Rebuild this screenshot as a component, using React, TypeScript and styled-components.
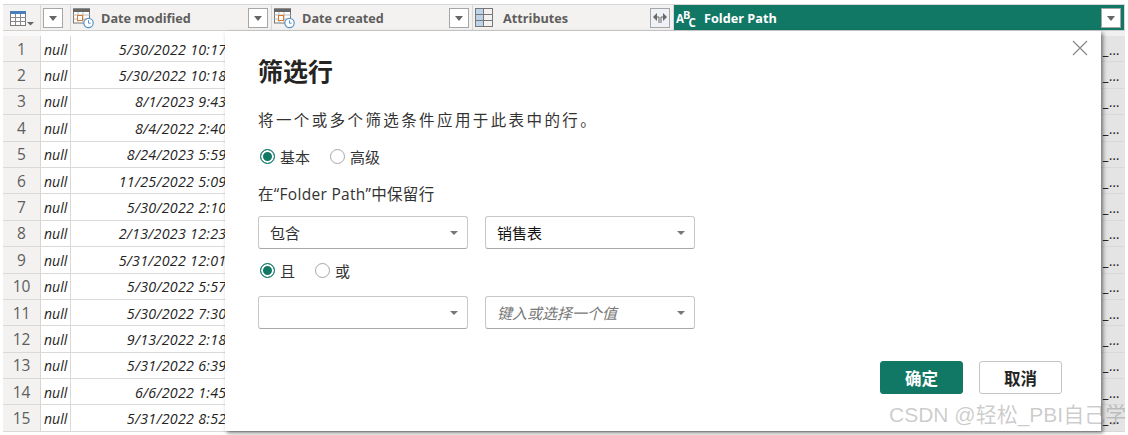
import React from 'react';
import styled, { createGlobalStyle } from 'styled-components';

const GREEN = '#117865';
const FONT = `"Open Sans", "Noto Sans CJK SC", sans-serif`;

const GlobalStyle = createGlobalStyle`
  html, body {
    margin: 0;
    padding: 0;
    background: #fff;
  }
`;

const Page = styled.div`
  position: relative;
  width: 1128px;
  height: 435px;
  overflow: hidden;
  background: #fff;
  font-family: ${FONT};
  padding: 4px 3px 0;
  box-sizing: border-box;
`;

const COLUMNS = '38px 30px 201px 201px 201px 451px';

const HeaderRow = styled.div`
  display: grid;
  grid-template-columns: ${COLUMNS};
  height: 27px;
  background: #f3f2f1;
  border-top: 1px solid #d6d6d6;
  border-bottom: 1px solid #cfcfcf;
  box-sizing: border-box;
`;

const HeaderCell = styled.div<{ $active?: boolean }>`
  display: flex;
  align-items: center;
  gap: 6px;
  box-sizing: border-box;
  padding: 0 3px 0 2px;
  min-width: 0;
  border-right: 1px solid #d6d6d6;
  background: ${(p) => (p.$active ? GREEN : 'transparent')};
  color: ${(p) => (p.$active ? '#fff' : '#605e5c')};
  font-size: 12.7px;
  font-weight: 700;
`;

const HeaderLabel = styled.span`
  flex: 1;
  padding-top: 1px;
  white-space: nowrap;
`;

const FilterButton = styled.div`
  flex: none;
  width: 20px;
  height: 20px;
  box-sizing: border-box;
  border: 1px solid #a6a6a6;
  background: #fff;
  display: flex;
  align-items: center;
  justify-content: center;

  &::after {
    content: '';
    margin-top: 2px;
    border-left: 4.5px solid transparent;
    border-right: 4.5px solid transparent;
    border-top: 5px solid #666;
  }
`;

const SwapButton = styled.div`
  flex: none;
  width: 20px;
  height: 20px;
  box-sizing: border-box;
  border: 1px solid #a6a6a6;
  background: #eef1f5;
  display: flex;
  align-items: center;
  justify-content: center;
`;

const Spacer = styled.div`
  display: grid;
  grid-template-columns: ${COLUMNS};
  height: 5px;
`;

const SpacerCell = styled.div<{ $tone: string }>`
  background: ${(p) => p.$tone};
`;

const Row = styled.div`
  display: grid;
  grid-template-columns: ${COLUMNS};
  height: 26.4px;
  box-sizing: border-box;
  border-bottom: 1px solid #d9d9d9;
`;

const RowNumber = styled.div`
  background: #f3f2f1;
  border-right: 1px solid #d6d6d6;
  color: #605e5c;
  font-size: 15.5px;
  display: flex;
  align-items: center;
  justify-content: center;
`;

const Cell = styled.div`
  display: flex;
  align-items: center;
  box-sizing: border-box;
  padding: 1px 3px 0 3px;
  border-right: 1px solid #d9d9d9;
  background: #fff;
  color: #252423;
  font-size: 14px;
  font-style: italic;
  white-space: nowrap;
  overflow: hidden;
`;

const DateCell = styled(Cell)`
  justify-content: flex-end;
  padding-right: 0;
  font-size: 14.3px;
  letter-spacing: 0.25px;
`;

const PathCell = styled(Cell)`
  justify-content: flex-end;
  padding-right: 5px;
  background: #e4e4e4;
  border-right: none;
`;

const Dialog = styled.div`
  position: absolute;
  left: 225px;
  top: 31px;
  width: 876px;
  height: 400px;
  box-sizing: border-box;
  padding: 22px 33px 0;
  background: #fff;
  box-shadow: 2px 2px 4px rgba(0, 0, 0, 0.5);
  color: #252423;
`;

const CloseIcon = styled.svg`
  position: absolute;
  top: 9px;
  right: 13px;
  width: 16px;
  height: 16px;
`;

const Title = styled.h1`
  margin: 0;
  font-size: 25px;
  line-height: 36px;
  font-weight: 700;
  color: #252423;
`;

const Description = styled.p`
  margin: 20px 0 0;
  font-size: 15.5px;
  line-height: 22px;
  letter-spacing: 2.4px;
  color: #333;
`;

const RadioRow = styled.div<{ $gap: number; $top: number }>`
  display: flex;
  align-items: center;
  gap: ${(p) => p.$gap}px;
  margin-top: ${(p) => p.$top}px;
  height: 22px;
  padding-left: 2px;
`;

const RadioOption = styled.label`
  display: flex;
  align-items: center;
  gap: 5px;
  font-size: 15px;
  color: #333;
`;

const RadioDot = styled.span<{ $on?: boolean }>`
  width: 15px;
  height: 15px;
  box-sizing: border-box;
  border-radius: 50%;
  border: 1px solid ${(p) => (p.$on ? GREEN : '#a6a6a6')};
  background: ${(p) => (p.$on ? GREEN : '#fff')};
  box-shadow: ${(p) => (p.$on ? 'inset 0 0 0 2px #fff' : 'none')};
`;

const KeepLabel = styled.div`
  margin-top: 16px;
  font-size: 15.5px;
  line-height: 22px;
  letter-spacing: 0.3px;
  color: #333;
`;

const SelectRow = styled.div<{ $top: number }>`
  display: flex;
  gap: 17px;
  margin-top: ${(p) => p.$top}px;
`;

const Select = styled.div<{ $placeholder?: boolean; $dark?: boolean }>`
  position: relative;
  width: 210px;
  height: 33px;
  box-sizing: border-box;
  padding: 0 11px;
  border: 1px solid #c8c8c8;
  border-bottom-color: #a8a8a8;
  border-radius: 3px;
  display: flex;
  align-items: center;
  font-size: 15px;
  font-style: ${(p) => (p.$placeholder ? 'italic' : 'normal')};
  color: ${(p) => (p.$placeholder ? '#777' : p.$dark ? '#111' : '#333')};

  &::after {
    content: '';
    position: absolute;
    right: 9px;
    top: 14px;
    border-left: 4px solid transparent;
    border-right: 4px solid transparent;
    border-top: 4px solid #777;
  }
`;

const Footer = styled.div`
  position: absolute;
  right: 39px;
  bottom: 37px;
  display: flex;
  gap: 16px;
`;

const Button = styled.button<{ $primary?: boolean }>`
  width: 83px;
  height: 33px;
  padding: 0;
  border-radius: 3px;
  box-sizing: border-box;
  border: 1px solid ${(p) => (p.$primary ? GREEN : '#c4c4c4')};
  background: ${(p) => (p.$primary ? GREEN : '#fff')};
  color: ${(p) => (p.$primary ? '#fff' : '#252423')};
  font-family: inherit;
  font-size: 16.5px;
  font-weight: 700;
`;

const Watermark = styled.div`
  position: absolute;
  left: 889px;
  top: 401px;
  font-family: "Liberation Sans", "Noto Sans CJK SC", sans-serif;
  font-size: 21px;
  line-height: 28px;
  color: rgba(120, 120, 120, 0.38);
  white-space: nowrap;
`;

const TableIcon = () => (
  <svg width="30" height="20" viewBox="0 0 30 20" style={{ flex: 'none', marginLeft: 1 }}>
    <rect x="4.5" y="3.5" width="15" height="14" fill="#fff" stroke="#7a7a7a" />
    <rect x="4" y="3" width="16" height="3" fill="#4a7ebb" />
    <path d="M4.5 9.5h15M4.5 13.5h15M9.5 6v11M14.5 6v11" stroke="#8a8a8a" />
    <path d="M21 14h7l-3.5 3.5z" fill="#666" />
  </svg>
);

const DateTimeIcon = () => (
  <svg width="22" height="22" viewBox="0 0 22 22" style={{ flex: 'none' }}>
    <rect x="0.5" y="2" width="16" height="14" fill="#fff" stroke="#777" />
    <rect x="0" y="1.5" width="17" height="3.5" fill="#666" />
    <path d="M0.5 8h16M0.5 12h16M5 5v11M10 5v11" stroke="#bbb" />
    <rect x="4.5" y="8.5" width="5" height="5" fill="#fff" stroke="#d9772b" />
    <circle cx="15.5" cy="16" r="4.7" fill="#fff" stroke="#5b93c9" strokeWidth="1.2" />
    <path d="M15.5 13.2v3h2.2" fill="none" stroke="#5b93c9" />
  </svg>
);

const AttributesIcon = () => (
  <svg width="22" height="20" viewBox="0 0 22 20" style={{ flex: 'none' }}>
    <rect x="0.5" y="0.5" width="8" height="18" fill="#bdd3ea" />
    <rect x="0.5" y="0.5" width="17" height="18" fill="none" stroke="#777" />
    <path d="M0.5 6.5h17M0.5 12.5h17M8.5 0.5v18" stroke="#777" />
  </svg>
);

const SwapIcon = () => (
  <svg width="16" height="12" viewBox="0 0 16 12">
    <path d="M1 5l4-4v8z M15 5l-4-4v8z" fill="#666" />
    <path d="M5 5h2v6M11 5H9v6" fill="none" stroke="#666" />
  </svg>
);

const TextTypeIcon = () => (
  <svg width="22" height="20" viewBox="0 0 22 20" style={{ flex: 'none' }}>
    <text x="0" y="14.5" fontSize="11.5" fill="#fff" fontFamily="Open Sans">A</text>
    <text x="7" y="10.5" fontSize="11" fill="#fff" fontFamily="Open Sans">B</text>
    <text x="12.5" y="18.5" fontSize="11.5" fill="#fff" fontFamily="Open Sans">C</text>
  </svg>
);

const DATES = [
  '5/30/2022 10:17:44 AM',
  '5/30/2022 10:18:02 AM',
  '8/1/2023 9:43:12 AM',
  '8/4/2022 2:40:36 PM',
  '8/24/2023 5:59:21 PM',
  '11/25/2022 5:09:10 PM',
  '5/30/2022 2:10:55 PM',
  '2/13/2023 12:23:08 PM',
  '5/31/2022 12:01:33 PM',
  '5/30/2022 5:57:19 PM',
  '5/30/2022 7:30:41 PM',
  '9/13/2022 2:18:27 PM',
  '5/31/2022 6:39:50 PM',
  '6/6/2022 1:45:16 PM',
  '5/31/2022 8:52:03 PM',
];

export default function App() {
  return (
    <Page>
      <GlobalStyle />
      <HeaderRow>
        <HeaderCell>
          <TableIcon />
        </HeaderCell>
        <HeaderCell>
          <FilterButton />
        </HeaderCell>
        <HeaderCell>
          <DateTimeIcon />
          <HeaderLabel>Date modified</HeaderLabel>
          <FilterButton />
        </HeaderCell>
        <HeaderCell>
          <DateTimeIcon />
          <HeaderLabel>Date created</HeaderLabel>
          <FilterButton />
        </HeaderCell>
        <HeaderCell>
          <AttributesIcon />
          <HeaderLabel>Attributes</HeaderLabel>
          <SwapButton>
            <SwapIcon />
          </SwapButton>
        </HeaderCell>
        <HeaderCell $active>
          <TextTypeIcon />
          <HeaderLabel>Folder Path</HeaderLabel>
          <FilterButton />
        </HeaderCell>
      </HeaderRow>
      <Spacer>
        <SpacerCell $tone="#f9f9f9" />
        <SpacerCell $tone="#fff" />
        <SpacerCell $tone="#fff" />
        <SpacerCell $tone="#fff" />
        <SpacerCell $tone="#fff" />
        <SpacerCell $tone="#f0f0f0" />
      </Spacer>
      {DATES.map((date, i) => (
        <Row key={date}>
          <RowNumber>{i + 1}</RowNumber>
          <Cell>null</Cell>
          <DateCell>{date}</DateCell>
          <Cell />
          <Cell />
          <PathCell>_...</PathCell>
        </Row>
      ))}
      <Dialog>
        <CloseIcon viewBox="0 0 16 16">
          <path d="M1 1l14 14M15 1L1 15" stroke="#8a8a8a" strokeWidth="1.3" fill="none" />
        </CloseIcon>
        <Title>筛选行</Title>
        <Description>将一个或多个筛选条件应用于此表中的行。</Description>
        <RadioRow $gap={20} $top={14}>
          <RadioOption>
            <RadioDot $on />
            基本
          </RadioOption>
          <RadioOption>
            <RadioDot />
            高级
          </RadioOption>
        </RadioRow>
        <KeepLabel>在“Folder Path”中保留行</KeepLabel>
        <SelectRow $top={11}>
          <Select>包含</Select>
          <Select $dark>销售表</Select>
        </SelectRow>
        <RadioRow $gap={20} $top={10}>
          <RadioOption>
            <RadioDot $on />
            且
          </RadioOption>
          <RadioOption>
            <RadioDot />
            或
          </RadioOption>
        </RadioRow>
        <SelectRow $top={15}>
          <Select />
          <Select $placeholder>键入或选择一个值</Select>
        </SelectRow>
        <Footer>
          <Button $primary>确定</Button>
          <Button>取消</Button>
        </Footer>
      </Dialog>
      <Watermark>CSDN @轻松_PBI自己学</Watermark>
    </Page>
  );
}
